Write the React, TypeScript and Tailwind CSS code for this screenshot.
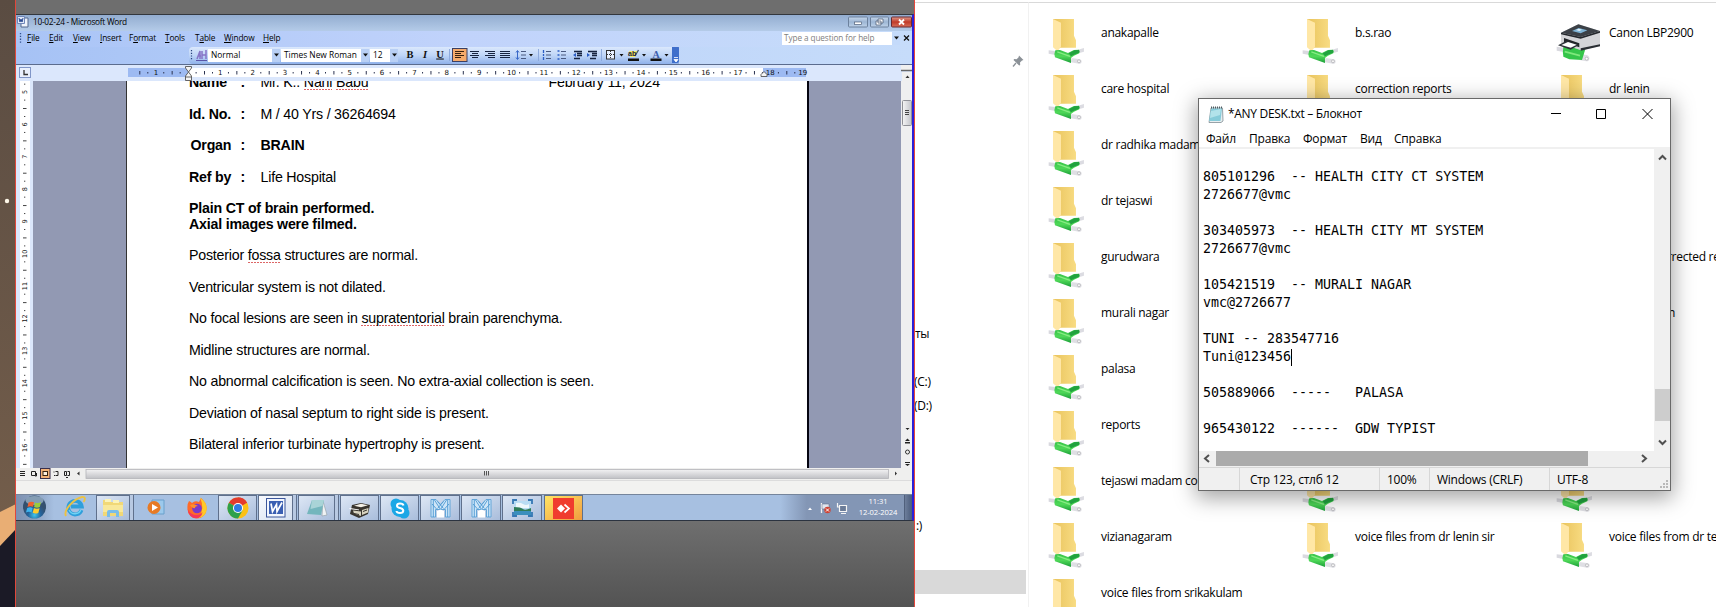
import type { ReactNode } from "react";

const UI = "font-['Open_Sans','Noto_Sans',sans-serif]";

/* ---------- Remote desktop: Word ---------- */

function Caret({ className = "" }: { className?: string }) {
  return (
    <svg className={className} width="7" height="4" viewBox="0 0 7 4">
      <path d="M1 .5h5L3.5 3.5z" fill="#111" />
    </svg>
  );
}

function WordTitleBar() {
  return (
    <div className="flex h-4 shrink-0 items-center bg-gradient-to-b from-[#93add0] to-[#b4cbe8] pb-0.5">
      <svg width="13" height="12" viewBox="0 0 13 12" className="ml-px">
        <path d="M4 2h7v9H4z" fill="#eef3fb" stroke="#55698f" />
        <path d="M.5.5h7v7h-7z" fill="#dfe8f8" stroke="#6f86b8" />
        <path d="M2 2l1 4 1-3 1 3 1-4" fill="none" stroke="#2b4a91" />
      </svg>
      <span className="ml-[3px] flex-1 text-[8.3px] leading-4 tracking-[-0.27px] text-black">10-02-24 - Microsoft Word</span>
      <svg width="64" height="12" viewBox="0 0 64 12">
        <defs>
          <linearGradient id="wb" x2="0" y2="1">
            <stop offset="0" stopColor="#c6d6ea" />
            <stop offset=".5" stopColor="#9db6d4" />
            <stop offset="1" stopColor="#bfd3ea" />
          </linearGradient>
          <linearGradient id="wr" x2="0" y2="1">
            <stop offset="0" stopColor="#e09a8c" />
            <stop offset=".5" stopColor="#c03a28" />
            <stop offset="1" stopColor="#d8705c" />
          </linearGradient>
        </defs>
        <rect x=".5" y="1" width="19" height="10" rx="1" fill="url(#wb)" stroke="#6c819d" />
        <rect x="22.500" y="1" width="18" height="10" rx="1" fill="url(#wb)" stroke="#6c819d" />
        <rect x="43.500" y="1" width="20" height="10" rx="1" fill="url(#wr)" stroke="#6b2a30" />
        <rect x="6.500" y="6" width="7" height="2.500" fill="#fff" stroke="#51607a" strokeWidth=".7" />
        <path d="M30 3h5v4h-5zM28 5h5v4h-5z" fill="#fff" stroke="#51607a" strokeWidth=".8" />
        <path d="M51 3.500l5 5m0-5l-5 5" stroke="#fff" strokeWidth="1.800" />
      </svg>
    </div>
  );
}

function MenuWord({ w, pre = "", u, post }: { w: string; pre?: string; u: string; post: string }) {
  return (
    <span className={w}>
      {pre}
      <span className="underline decoration-1 underline-offset-1">{u}</span>
      {post}
    </span>
  );
}

function WordMenuBar() {
  return (
    <div className="flex h-4 shrink-0 items-center bg-gradient-to-r from-[#a9c4f6] via-[#c1d3fb] via-50% to-[#c6dcfa] pb-0.5">
      <svg width="4" height="12" className="ml-[3px]">
        <path d="M1.500 1v11" stroke="#33508f" strokeWidth="1.300" strokeDasharray="1.300 1.500" />
      </svg>
      <div className="ml-[4px] flex flex-1 text-[8.3px] leading-4 tracking-[-0.15px] text-black">
        <MenuWord w="w-[22px]" u="F" post="ile" />
        <MenuWord w="w-6" u="E" post="dit" />
        <MenuWord w="w-[27px]" u="V" post="iew" />
        <MenuWord w="w-[29px]" u="I" post="nsert" />
        <MenuWord w="w-9" pre="F" u="o" post="rmat" />
        <MenuWord w="w-[30px]" u="T" post="ools" />
        <MenuWord w="w-[29px]" pre="T" u="a" post="ble" />
        <MenuWord w="w-[39px]" u="W" post="indow" />
        <MenuWord w="w-8" u="H" post="elp" />
      </div>
      <div className="flex h-[13px] w-[110px] items-center bg-white pl-[2px] text-[8.2px] leading-3 tracking-[-0.08px] text-[#808080]">Type a question for help</div>
      <div className="flex h-[13px] w-[8px] items-center justify-center bg-[#c4dafa]">
        <Caret />
      </div>
      <svg width="9" height="8" viewBox="0 0 9 8" className="mr-px ml-[2px]">
        <path d="M2 1.500l5 5m0-5l-5 5" stroke="#111" strokeWidth="1.300" />
      </svg>
    </div>
  );
}

function Combo({ w, children }: { w: string; children: ReactNode }) {
  return (
    <div className="flex items-center">
      <div className={`${w} h-[13px] bg-white pl-[3px] text-[8.4px] leading-[12px] text-black`}>{children}</div>
      <div className="flex h-[13px] w-[8px] items-center justify-center bg-[#b9d0f5]">
        <Caret />
      </div>
    </div>
  );
}

function WordToolbar() {
  return (
    <div className="flex h-[17px] shrink-0 items-center bg-gradient-to-r from-[#a6c2f5] via-[#bcd3f9] to-[#c6dcfa] pl-[173px]">
      <div className="flex h-[17px] w-[490px] items-center rounded-l-sm bg-gradient-to-b from-[#dbe8fc] via-[#bed5f7] to-[#8fb1ea] pb-px">
        <svg width="19" height="14" viewBox="0 0 19 14">
          <path d="M2.500 2v10" stroke="#27417c" strokeWidth="1.200" strokeDasharray="1.200 1.500" />
          <path d="M8 11l3-8v8M9 8h3M13 3v8M17 2v9M13 7h4" fill="none" stroke="#8674c6" strokeWidth="1.500" />
          <path d="M7 12.500h11" stroke="#5a55a8" />
        </svg>
        <Combo w="w-16">Normal</Combo>
        <div className="w-px" />
        <Combo w="w-20">Times New Roman</Combo>
        <div className="w-px" />
        <Combo w="w-5">12</Combo>
        <svg className="ml-1 shrink-0" width="277" height="16" viewBox="402 47 277 16">
          <path d="M449.500 49v12M538.500 49v12M601.500 49v12" stroke="#8fabdd" />
          <g fontFamily="Liberation Serif, serif" fontSize="10.500" fill="#111" textAnchor="middle">
            <text x="410" y="58" fontWeight="bold">B</text>
            <text x="425" y="58" fontWeight="bold" fontStyle="italic">I</text>
            <text x="440" y="57.500" fontWeight="bold" textDecoration="underline">U</text>
          </g>
          <rect x="452.500" y="48.500" width="14.500" height="13" fill="#f5ab6c" stroke="#3b3f63" />
          <path d="M455 51.500h9M455 53.500h6M455 55.500h9M455 57.500h6" stroke="#38210e" strokeWidth="1.200" />
          <path d="M470 51.500h9M472 53.500h6M470 55.500h9M472 57.500h6M485 51.500h10M488 53.500h7M485 55.500h10M488 57.500h7M500 51.500h10M500 53.500h10M500 55.500h10M500 57.500h10" stroke="#16233f" strokeWidth="1.200" />
          <path d="M517.500 51v8M516 52.500l1.500-2 1.500 2M516 57.500l1.500 2 1.500-2" stroke="#3868c8" fill="none" />
          <path d="M521 51.500h5M521 55h5M521 58.500h5" stroke="#4a5a80" />
          <path d="M543.500 50v3M543.500 54v2M543.500 57v3" stroke="#2b5dc5" strokeWidth="1.300" />
          <path d="M546 51.500h5M546 55h5M546 58.500h5M561 51.500h5M561 55h5M561 58.500h5" stroke="#4a5a80" />
          <path d="M557.500 51h2M557.500 55h2M557.500 59h2" stroke="#2b5dc5" strokeWidth="1.600" />
          <path d="M574 51.500h8M577 53.500h5M577 55.500h5M574 58.500h6M588 51.500h9M592 53.500h5M592 55.500h5M590 58.500h6" stroke="#16233f" strokeWidth="1.300" />
          <path d="M576 53l-3 2 3 2zM587 53l3 2-3 2z" fill="#2b5dc5" />
          <rect x="606.500" y="50.500" width="8" height="8.500" fill="#e9f1ff" stroke="#333" />
          <path d="M610.500 51v8M607 54.500h8" stroke="#333" strokeDasharray="1 1" />
          <path d="M629 51h9l-3 6h-5z" fill="#f5ef6c" />
          <path d="M628 58.500h11v2.500h-11z" fill="#111" />
          <path d="M638.500 50l-3.500 6" stroke="#456" strokeWidth="1.300" />
          <text x="628" y="56" fontSize="7" fontWeight="bold" fontFamily="Liberation Sans, sans-serif" fill="#223">ab</text>
          <text x="656" y="57.500" fontSize="10" fontWeight="bold" fontFamily="Liberation Serif, serif" textAnchor="middle" fill="#3d5fae">A</text>
          <path d="M650.500 58.500h11v2.500h-11z" fill="#111" />
          <path d="M529 54h4l-2 2.500zM619.500 54h4l-2 2.500zM642 54h4l-2 2.500zM664.500 54h4l-2 2.500z" fill="#111" />
          <path d="M672 46h5a2 2 0 0 1 2 2v13a2 2 0 0 1-2 2h-5z" fill="#3f6fcb" />
          <path d="M674 57.500h4M674 59.500h4l-2 2.500z" stroke="#fff" strokeWidth=".8" fill="#fff" />
        </svg>
      </div>
    </div>
  );
}

const range = (a: number, b: number) => Array.from({ length: b - a + 1 }, (_, i) => a + i);

function HorizontalRuler() {
  const unit = 32.35;
  return (
    <div className="flex h-4 shrink-0 bg-[#dbe7fc]">
      <svg width="896" height="16" viewBox="16 65 896 16">
        <rect x="19.500" y="67.500" width="11" height="10" fill="#e9f0fd" stroke="#8096c8" />
        <path d="M24 70v4.500h4" fill="none" stroke="#333" strokeWidth="1.300" />
        <rect x="128" y="68" width="60" height="9" fill="#9dbaf2" />
        <rect x="188" y="68" width="575" height="9" fill="#fff" />
        <rect x="763" y="68" width="43" height="9" fill="#9dbaf2" />
        {range(-2, 18).map((n) => {
          const x = 188 + n * unit;
          return (
            <g key={n} fill="#2c3350">
              {n > -2 && <rect x={x + 7.6} y="72" width="1" height="1.500" />}
              {x + 16 > 128 && x + 16 < 804 && <rect x={x + 16} y="71" width="1" height="3.500" />}
              {x + 24 > 128 && x + 24 < 804 && <rect x={x + 24} y="72" width="1" height="1.500" />}
            </g>
          );
        })}
        <g fontSize="7" fontFamily="DejaVu Sans, sans-serif" textAnchor="middle" fill="#111">
          <text x="156" y="75.300">1</text>
          {range(1, 19).map((n) => (
            <text key={n} x={188 + n * unit} y="75.300">
              {n}
            </text>
          ))}
        </g>
        <path d="M185.500 66.500h6v1.500l-3 4 3 4v4.500h-6V76l3-4-3-4zM185.500 77h6" fill="#f4f4f4" stroke="#555" strokeWidth=".9" />
        <path d="M761 76.500v-2l3-3 3 3v2z" fill="#f4f4f4" stroke="#555" strokeWidth=".9" />
        <path d="M901 65h11v5h-11z" fill="#efefef" />
        <path d="M901 70.500h11" stroke="#666" strokeWidth="1.500" />
        <path d="M902 72h10v9h-10z" fill="#efefef" />
        <path d="M905.500 78l2-2.500 2 2.500z" fill="#333" />
      </svg>
    </div>
  );
}

function VerticalRuler() {
  const unit = 32.35;
  return (
    <svg width="17" height="387" viewBox="16 81 17 387" className="shrink-0 bg-[#dbe7fc]">
      <rect x="20" y="81" width="10" height="387" fill="#fff" />
      {range(4, 16).map((n) => {
        const y = 92 + (n - 5) * unit;
        return (
          <g key={n} fill="#444">
            <rect x="24" y={y + 7.6} width="1.300" height="1" />
            <rect x="23" y={y + 16} width="3.500" height="1" />
            <rect x="24" y={y + 24} width="1.300" height="1" />
          </g>
        );
      })}
      <g fontSize="6.500" fontFamily="DejaVu Sans, sans-serif" textAnchor="middle" fill="#111">
        {range(5, 16).map((n) => {
          const y = 92 + (n - 5) * unit;
          return (
            <text key={n} x="27" y={y} transform={`rotate(-90 27 ${y})`}>
              {n}
            </text>
          );
        })}
      </g>
    </svg>
  );
}

function Misspelt({ children }: { children: ReactNode }) {
  return (
    <span className="bg-[repeating-linear-gradient(90deg,#d66_0_2px,transparent_2px_3px)] bg-[length:100%_1px] bg-[position:0_15px] bg-no-repeat">
      {children}
    </span>
  );
}

function Field({ label, value, indent = "", bold = false }: { label: ReactNode; value: ReactNode; indent?: string; bold?: boolean }) {
  return (
    <div className="mb-[15.76px] flex">
      <b className={`w-[51.5px] ${indent}`}>{label}</b>
      <b className="w-[20px]">:</b>
      <span className={bold ? "font-bold" : ""}>{value}</span>
    </div>
  );
}

function DocumentPage() {
  return (
    <div className="w-[680px] shrink-0 overflow-hidden bg-white pl-[62px] font-['Liberation_Sans',Arial,sans-serif] text-[14.2px] leading-[15.76px] tracking-[-0.2px] whitespace-pre text-black">
      <div className="-mt-[6px] mb-[15.76px] flex">
        <b className="w-[51.5px]">Name</b>
        <b className="w-[20px]">:</b>
        <span className="w-[288px]">
          Mr. K.. <Misspelt>Nani</Misspelt> <Misspelt>Babu</Misspelt>
        </span>
        <span>February 11, 2024</span>
      </div>
      <Field label="Id. No." value="M / 40 Yrs / 36264694" />
      <Field label="Organ" value="BRAIN" indent="pl-[1.5px]" bold />
      <Field label="Ref by" value="Life Hospital" />
      <p className="font-bold">Plain CT of brain performed.</p>
      <p className="mb-[15.76px] font-bold">Axial images were filmed.</p>
      <p className="mb-[15.76px]">
        Posterior <Misspelt>fossa</Misspelt> structures are normal.
      </p>
      <p className="mb-[15.76px]">Ventricular system is not dilated.</p>
      <p className="mb-[15.76px]">
        No focal lesions are seen in <Misspelt>supratentorial</Misspelt> brain parenchyma.
      </p>
      <p className="mb-[15.76px]">Midline structures are normal.</p>
      <p className="mb-[15.76px]">No abnormal calcification is seen. No extra-axial collection is seen.</p>
      <p className="mb-[15.76px]">Deviation of nasal septum to right side is present.</p>
      <p>Bilateral inferior turbinate hypertrophy is present.</p>
    </div>
  );
}

function DocumentArea() {
  return (
    <div className="flex h-[387px] shrink-0 overflow-hidden bg-[#9299b3]">
      <VerticalRuler />
      <div className="w-[94px] shrink-0 border-r border-[#333]" />
      <DocumentPage />
      <div className="w-[2px] shrink-0 bg-[#050510]" />
      <div className="flex-1" />
      <svg width="11" height="387" viewBox="901 81 11 387" className="shrink-0 bg-[#efeff0]">
        <defs>
          <linearGradient id="th">
            <stop offset="0" stopColor="#f6f6f6" />
            <stop offset="1" stopColor="#c2c3c9" />
          </linearGradient>
        </defs>
        <rect x="902.500" y="100.500" width="9" height="25" rx="1" fill="url(#th)" stroke="#8f9096" />
        <path d="M905 110.500h4M905 112.500h4M905 114.500h4" stroke="#444" />
        <path d="M905.500 428l2 2 2-2z M905 441l2.500-2.500 2.500 2.500zM905 443.500h5v-1.500h-5zM905 462h5v1h-5zM905 464l2.500 2 2.500-2z" fill="#222" />
        <circle cx="907.500" cy="452" r="2" fill="none" stroke="#333" />
      </svg>
    </div>
  );
}

function ViewBar() {
  return (
    <div className="h-[12px] shrink-0 bg-[#efefee]">
      <svg width="896" height="12" viewBox="16 468 896 12" className="block">
        <defs>
          <linearGradient id="hs" x2="0" y2="1">
            <stop offset="0" stopColor="#f2f2f3" />
            <stop offset="1" stopColor="#c0c1c5" />
          </linearGradient>
        </defs>
        <path d="M20 471.500h5M20 473.500h5M20 475.500h5" stroke="#222" strokeWidth="1.200" />
        <path d="M31.500 471.500h4v4h-4zM35 476h1.500v-3" fill="none" stroke="#222" />
        <rect x="40.500" y="468.500" width="9.500" height="10" fill="#f3b277" stroke="#3a2f4a" />
        <rect x="43" y="471.500" width="4.500" height="4" fill="#fff1df" stroke="#3a2412" />
        <path d="M53.500 472h1M55.500 471.500h2.500v4h-2.500M54 475.500h1" fill="none" stroke="#222" />
        <path d="M64.500 471.500h2v4h-2zM67.500 471.500h2v4h-2M66 477.500h2" fill="none" stroke="#222" />
        <path d="M79.500 471.500v4l-2.500-2z" fill="#333" />
        <rect x="86" y="469.500" width="802.500" height="9" fill="url(#hs)" stroke="#b3b4b8" strokeWidth=".8" />
        <path d="M484.500 471v4.500M486.500 471v4.500M488.500 471v4.500" stroke="#555" />
        <path d="M895 471.500v4l2-2z" fill="#333" />
      </svg>
    </div>
  );
}

/* ---------- Remote desktop: taskbar ---------- */

function TaskButton({ w, ml = "", stacked = false, tone = "from-[#dde7f5] to-[#a9bddb]", children }: { w: string; ml?: string; stacked?: boolean; tone?: string; children: ReactNode }) {
  return (
    <div className={`flex h-[25px] shrink-0 ${ml}`}>
      <div className={`${w} flex items-center justify-center border-x border-t border-[#5f708c] bg-gradient-to-br ${tone}`}>{children}</div>
      {stacked && <div className="w-1 border-r border-[#5f708c] bg-[#b8c9e2]" />}
    </div>
  );
}

function MIcon() {
  return (
    <svg width="21" height="20" viewBox="0 0 21 20">
      <path d="M1 1.500h5l4.500 5 4.500-5h5V19h-4.500v-7.500h-10V19H1z" fill="#cfe6f8" stroke="#62a5d8" />
      <path d="M3.300 2v17M4.500 2l6 9.500 6-9.500M17.700 2v17M2 6l5 5.500M19 6l-5 5.500M7.500 3.500l6 7M13.500 3.500l-6 7" fill="none" stroke="#4c98d2" strokeWidth=".9" />
      <path d="M7 13l3.500-1.500L14 13v6.500H7z" fill="#fff" />
    </svg>
  );
}

function Taskbar() {
  return (
    <div className="flex h-[26px] shrink-0 items-start overflow-hidden border-t border-[#75859b] bg-[#a7c0e1]">
      <div className="flex h-full w-[38px] shrink-0 items-center justify-center bg-gradient-to-r from-[#7d91b1] via-[#8ba1c1] to-[#a7c0e1]">
        <svg width="26" height="24" viewBox="0 0 26 24" className="-mt-0.5">
          <defs>
            <radialGradient id="orb" cy=".85">
              <stop offset="0" stopColor="#3fc6ee" />
              <stop offset=".55" stopColor="#23639c" />
              <stop offset="1" stopColor="#34506f" />
            </radialGradient>
          </defs>
          <circle cx="12.500" cy="12" r="11.500" fill="url(#orb)" />
          <ellipse cx="12.500" cy="5.500" rx="9" ry="4.500" fill="#c7dcec" opacity=".55" />
          <path d="M6.500 7.500q3-1.500 5.500-.3l-1 4.600q-2.700-1-5.500.2z" fill="#f0612e" />
          <path d="M13 7.500q3 1.200 6-.3l-1.200 4.900q-3 1.200-5.700-.2z" fill="#9ccc3c" />
          <path d="M5.200 13q2.800-1.200 5.500-.1L9.500 17.500q-2.700-1.300-5.500 0z" fill="#3db4f0" />
          <path d="M11.900 13.100q2.700 1.200 5.700.2L16.300 18q-3 1.200-5.600-.2z" fill="#fccc2e" />
        </svg>
      </div>
      <svg width="22" height="24" viewBox="0 0 22 24" className="ml-[10px] shrink-0">
        <path d="M17.500 15a6.800 6.800 0 1 1 .3-3.500H7" fill="none" stroke="#2f9fdb" strokeWidth="3.800" />
        <path d="M17 14.500a6.500 6.500 0 0 1-12 .5" fill="none" stroke="#6fd3f5" strokeWidth="1.300" />
        <path d="M2 21C-1 16 9 4 18 2c4-.6 3 3 1.500 5" fill="none" stroke="#ecc243" strokeWidth="1.900" />
      </svg>
      <TaskButton w="w-[34px]" ml="ml-[10px]" stacked>
        <svg width="22" height="20" viewBox="0 0 22 20">
          <path d="M1 2h7l1 2h12v14H1z" fill="#f1d877" />
          <path d="M3 1h6v3H3zM11 2h6v3h-6z" fill="#fbf3b9" />
          <path d="M1 7h20v7H1z" fill="#f8e89a" />
          <path d="M5 19v-5q0-2 2-2h8q2 0 2 2v5h-3v-4H8v4z" fill="#79bde9" />
        </svg>
      </TaskButton>
      <svg width="18" height="18" viewBox="0 0 18 18" className="mt-[4px] ml-[13px] shrink-0">
        <path d="M5 1h12v14H5z" fill="#9cc9ec" stroke="#6aa0cc" />
        <circle cx="7" cy="8.500" r="6.500" fill="#e77a25" />
        <path d="M5 5l6 3.500L5 12z" fill="#fff" />
      </svg>
      <svg width="22" height="22" viewBox="0 0 22 22" className="mt-[2px] ml-[21px] shrink-0">
        <path d="M3 4q2 1 3 2Q9 3 13 5l2-4q6 5 5.500 11A9.500 9.500 0 0 1 1.500 12Q1 7 3 4z" fill="#ff6a28" />
        <path d="M14 .5q7 5 6.800 11.500a9.500 9.500 0 0 1-8 9Q19 12 14 .5z" fill="#ffc928" />
        <path d="M1.600 12q3 6 9 6 4 0 6-3-1 6-6.600 6.300-7 0-8.400-9.300z" fill="#f5375a" />
        <circle cx="11" cy="11.500" r="4.800" fill="#7a39c9" />
        <path d="M4 8q4-2 8 1-3 0-3 2-3 1-5-3z" fill="#ff8f2a" />
      </svg>
      <TaskButton w="w-[39px]" ml="ml-[10px]">
        <svg width="22" height="22" viewBox="0 0 22 22">
          <circle cx="11" cy="11" r="10.500" fill="#fbc116" />
          <path d="M11 11L1.900 5.750A10.500 10.500 0 0 1 20.100 5.750z" fill="#e33b2e" />
          <path d="M11 .5a10.500 10.500 0 0 1 9.100 5.250H11z" fill="#e33b2e" />
          <path d="M11 11L1.900 5.750A10.500 10.500 0 0 0 11 21.500l4.500-8z" fill="#2da04c" />
          <circle cx="11" cy="11" r="5" fill="#fff" />
          <circle cx="11" cy="11" r="4" fill="#2f7be4" />
        </svg>
      </TaskButton>
      <TaskButton w="w-[35px]" ml="ml-px" stacked tone="from-[#f8fafe] to-[#d5e0f0]">
        <svg width="20" height="20" viewBox="0 0 20 20">
          <rect x=".5" y=".5" width="18.500" height="18.500" fill="#f2f6fd" stroke="#3b569b" />
          <path d="M3 3h14v13H3z" fill="#3a5fb2" />
          <path d="M5 5.500l1.500 8 4-7 .5 7 5-9" fill="none" stroke="#fff" strokeWidth="1.700" />
        </svg>
      </TaskButton>
      <TaskButton w="w-[37px]" ml="ml-px" stacked>
        <svg width="22" height="20" viewBox="0 0 22 20">
          <path d="M17 3l4 14-5 1z" fill="#f0f3f4" stroke="#8f9ca3" strokeWidth=".6" />
          <path d="M6 2h12l-3 15-14-1z" fill="#74b6bd" />
          <path d="M6 2h12l-1.500 6-12 3z" fill="#a9d4d7" />
        </svg>
      </TaskButton>
      <TaskButton w="w-[39px]" ml="ml-px">
        <svg width="23" height="17" viewBox="0 0 23 17" className="mt-1">
          <path d="M4 3l9-2 9 2-2 9-9 4-9-4z" fill="#39352e" />
          <path d="M6 3.700l7-1.900 7 1.400-7 2z" fill="#f5f2e8" />
          <path d="M5 8.500l8 1v4.500l-7-2.500zM14 8l6.500-2-.5 4.500-6 2.500z" fill="#d8d3bf" />
          <path d="M6 11.500l5 1M15 9.500l4-1.500" stroke="#39352e" />
          <path d="M2 6l9 1.500v.8L1 7z" fill="#fff" />
        </svg>
      </TaskButton>
      <TaskButton w="w-[39px]" ml="ml-px">
        <svg width="20" height="21" viewBox="0 0 20 21">
          <circle cx="10" cy="10.500" r="8.500" fill="#1aa7e6" />
          <circle cx="6" cy="6" r="5.500" fill="#1aa7e6" />
          <circle cx="14" cy="15" r="5.500" fill="#1aa7e6" />
          <path d="M13.500 7.500Q13 5.500 10 5.500t-3 2.300q0 1.700 3 2.300t3.300 2.400q0 2.500-3.300 2.500T6.500 13" fill="none" stroke="#fff" strokeWidth="2" />
        </svg>
      </TaskButton>
      <TaskButton w="w-[40px]" ml="ml-px">
        <MIcon />
      </TaskButton>
      <TaskButton w="w-[40px]" ml="ml-px">
        <MIcon />
      </TaskButton>
      <TaskButton w="w-[40px]" ml="ml-px">
        <svg width="21" height="18" viewBox="0 0 21 18">
          <path d="M2 2h17v14H2z" fill="#b9dcf4" />
          <path d="M4 4q4-1 7 1t6 0v4H4z" fill="#eef7fc" />
          <path d="M2 8q7 0 9 2t8-1v3H2z" fill="#2f7c58" />
          <path d="M2 12h17v4H2z" fill="#3a8fbd" />
          <path d="M1 5V1h4M16 1h4v4M20 13v4h-4M5 17H1v-4" fill="none" stroke="#3678b4" strokeWidth="1.800" />
        </svg>
      </TaskButton>
      <TaskButton w="w-[39px]" ml="ml-[2px]" tone="from-[#ffe564] to-[#ef9c3f]">
        <svg width="21" height="21" viewBox="0 0 21 21">
          <path d="M0 0h21v21H0z" fill="#f03c2e" />
          <path d="M4 10.500L8 6.500l4 4-4 4z" fill="#fff" />
          <path d="M11.500 6.500l4.500 4-4.500 4" fill="none" stroke="#fff" strokeWidth="1.700" />
        </svg>
      </TaskButton>
      <div className="flex h-full flex-1 items-center justify-end bg-gradient-to-r from-[#a7c0e1] from-60% to-[#8396b5] to-68%">
        <svg width="42" height="14" viewBox="806 500 42 14">
          <path d="M808 509l2-2.500 2 2.500z" fill="#fff" />
          <path d="M821.500 502v10" stroke="#f4f4f4" strokeWidth="1.300" />
          <path d="M822 503h7v5h-7z" fill="#dfe5ee" stroke="#596780" strokeWidth=".5" />
          <circle cx="827.500" cy="509" r="3.200" fill="#cf4536" />
          <path d="M826 507.500l3 3m0-3l-3 3" stroke="#fff" />
          <path d="M839.500 504.500h7v6h-7z" fill="#6b7c98" stroke="#f5f5f5" strokeWidth="1.200" />
          <path d="M837.500 502v4h2M841 512.500h5" fill="none" stroke="#f5f5f5" strokeWidth="1.200" />
        </svg>
        <div className="-mt-px mr-[6px] ml-[10px] w-[40px] text-center text-[7.6px] leading-[11px] tracking-[-0.1px] whitespace-nowrap text-white">
          11:31
          <br />
          12-02-2024
        </div>
        <div className="h-full w-2 border-l border-[#50607c] bg-gradient-to-r from-[#6d7e9b] to-[#4b5c7b]" />
      </div>
    </div>
  );
}

function RemoteDesktop() {
  return (
    <div className={`flex h-full w-[899px] shrink-0 flex-col border-r border-[#e5483c] bg-[#6e6e6e] ${UI}`}>
      <div className="h-[14px] shrink-0 bg-[#6e6e6e]" />
      <div className="flex h-[507px] shrink-0 flex-col border-t border-r-2 border-b border-t-[#33373d] border-r-[#2a20d8] border-b-[#2b3340]">
        <WordTitleBar />
        <WordMenuBar />
        <WordToolbar />
        <div className="h-px shrink-0 bg-[#5b6c8e]" />
        <HorizontalRuler />
        <DocumentArea />
        <ViewBar />
        <div className="h-[14px] shrink-0 border-t border-[#dcdcdc] bg-[#f2f2f0]" />
        <Taskbar />
      </div>
      <div className="flex-1 bg-gradient-to-b from-[#6f6f6f] to-[#535353]" />
    </div>
  );
}

/* ---------- Explorer ---------- */

function FolderIcon() {
  return (
    <svg width="37.300" height="47.300" viewBox="84 54 112 142" className="shrink-0">
      <defs>
        <linearGradient id="fb">
          <stop offset="0" stopColor="#e9c35c" />
          <stop offset="1" stopColor="#f8dc83" />
        </linearGradient>
        <linearGradient id="gc" x2="0" y2="1">
          <stop offset="0" stopColor="#35c247" />
          <stop offset=".5" stopColor="#4fd858" />
          <stop offset="1" stopColor="#1c9f39" />
        </linearGradient>
      </defs>
      <path d="M99 57h63v50l6 14v22h-63z" fill="url(#fb)" />
      <path d="M99 57l24 11v72l-10 14-14-12z" fill="#ffe7a6" />
      <path d="M86 151l20 2v12l-20-4z" fill="#d9d9df" />
      <path d="M174 149l18-5v11l-16 5z" fill="#dcdce2" />
      <path d="M106 151l14-1 24 9 18-9 15-1q4 5 1 11l-16 7-9 7v15l-48-17q-4-10 1-21z" fill="url(#gc)" />
      <path d="M146 160l18-9 13-1q2 4 0 8l-15 6-9 5z" fill="#21a23f" />
      <path d="M112 156l38 13" stroke="#86ec83" strokeWidth="4" />
      <path d="M154 174l22 3q9 1 9 8t-8 6l-24-4z" fill="#dfdfe4" />
      <circle cx="177" cy="184" r="4.500" fill="#f7f7f7" stroke="#a9a9ad" strokeWidth="2" />
    </svg>
  );
}

function PrinterIcon() {
  return (
    <svg width="44.700" height="39.300" viewBox="228 68 134 118" className="mt-[5px] shrink-0">
      <path d="M230 139l22 3v13l-22-4z" fill="#d9d9df" />
      <path d="M304 162l16 2q9 3 8 11t-9 8l-18-3z" fill="#dfdfe4" />
      <path d="M250 140l66 6-6 20-4 13-38-2-18-8q-3-14 0-29z" fill="#35c54a" />
      <path d="M254 154l46 12" stroke="#7fe87c" strokeWidth="5" />
      <circle cx="320" cy="175" r="4.500" fill="#fff" stroke="#a9a9ad" strokeWidth="2" />
      <path d="M243 97l52-25 65 20v45l-58 13-59-22z" fill="#d4d5d8" />
      <path d="M243 97l52-25 65 20-58 18z" fill="#3c4147" />
      <path d="M243 97l59 13 58-18v5l-58 18-59-13z" fill="#24282d" />
      <path d="M276 92l20-9 26 7-20 9z" fill="#7fb4d6" />
      <path d="M288 89l8-4 10 3-8 4z" fill="#e4f2fa" />
      <path d="M252 113l46 16v12l-46-16z" fill="#222629" />
      <path d="M234 135l24-13 38 12-24 14z" fill="#2e3338" />
      <path d="M244 134l20-9 26 8-18 9z" fill="#fff" />
      <path d="M302 144l58-12v6l-58 13z" fill="#2a2e33" />
    </svg>
  );
}

type Item = { label?: string; icon: "folder" | "printer" | "none"; shift?: string };

const rows: Item[][] = [
  [{ label: "anakapalle", icon: "folder" }, { label: "b.s.rao", icon: "folder" }, { label: "Canon LBP2900", icon: "printer" }],
  [{ label: "care hospital", icon: "folder" }, { label: "correction reports", icon: "folder" }, { label: "dr lenin", icon: "folder" }],
  [{ label: "dr radhika madam", icon: "folder" }],
  [{ label: "dr tejaswi", icon: "folder" }],
  [{ label: "gurudwara", icon: "folder" }, { icon: "none" }, { label: "rrected re", icon: "none", shift: "pl-[58px]" }],
  [{ label: "murali nagar", icon: "folder" }, { icon: "none" }, { label: "n", icon: "none", shift: "pl-[59px]" }],
  [{ label: "palasa", icon: "folder" }],
  [{ label: "reports", icon: "folder" }],
  [{ label: "tejaswi madam cor", icon: "folder" }, { icon: "folder" }, { icon: "folder" }],
  [{ label: "vizianagaram", icon: "folder" }, { label: "voice files from dr lenin sir", icon: "folder" }, { label: "voice files from dr te", icon: "folder" }],
  [{ label: "voice files from srikakulam", icon: "folder" }],
];

function FileCell({ item }: { item: Item }) {
  return (
    <div className="flex w-[254px] shrink-0 items-start">
      <div className="w-[53px] shrink-0">
        {item.icon === "folder" && <FolderIcon />}
        {item.icon === "printer" && <PrinterIcon />}
      </div>
      <span className={`mt-[7px] whitespace-nowrap ${item.shift ?? ""}`}>{item.label}</span>
    </div>
  );
}

function Explorer() {
  return (
    <div className={`flex h-full flex-1 overflow-hidden bg-white pt-[2px] text-[12px] leading-4 tracking-[-0.28px] text-black ${UI}`}>
      <div className="flex w-[114px] shrink-0 flex-col border-t border-r border-t-[#d9d9d9] border-r-[#f1f1f1]">
        <svg width="12" height="12" viewBox="0 0 12 12" className="mt-[52px] ml-[97px] shrink-0">
          <path d="M7 .5L11.500 5l-1.500.5-2 2 .2 2.500-1 .5L1.500 5l.7-1 2.400.2 2-2z" fill="#8b9197" />
          <path d="M4 8L1 11.500" stroke="#8b9197" strokeWidth="1.300" />
        </svg>
        <div className="mt-[259px]">ты</div>
        <div className="mt-8 -ml-px">(C:)</div>
        <div className="mt-2 -ml-px">(D:)</div>
        <div className="mt-[104px] ml-px">:)</div>
        <div className="mt-[36px] h-6 w-[111px] bg-[#d9d9d9]" />
      </div>
      <div className="flex flex-1 flex-col overflow-hidden border-t border-[#d9d9d9] pt-[15px] pl-[19px]">
        {rows.map((row, i) => (
          <div key={i} className="flex h-14 shrink-0">
            {row.map((item, j) => (
              <FileCell key={j} item={item} />
            ))}
          </div>
        ))}
      </div>
    </div>
  );
}

/* ---------- Notepad ---------- */

const note = `805101296  -- HEALTH CITY CT SYSTEM
2726677@vmc

303405973  -- HEALTH CITY MT SYSTEM
2726677@vmc

105421519  -- MURALI NAGAR
vmc@2726677

TUNI -- 283547716
Tuni@123456`;

const noteTail = `

505889066  -----   PALASA

965430122  ------  GDW TYPIST`;

function Notepad() {
  return (
    <div className={`absolute top-[98px] left-[1198px] flex h-[393px] w-[473px] flex-col border border-[#696969] bg-white text-black shadow-[0_5px_20px_2px_rgba(0,0,0,0.36)] ${UI}`}>
      <div className="flex h-[31px] shrink-0 items-center pb-px pl-[9px] text-[12px] tracking-[-0.3px]">
        <svg width="16" height="17" viewBox="0 0 16 17">
          <path d="M3 2h11.500l.5 13-2 1.500H1z" fill="#e8eef0" stroke="#7f8d93" strokeWidth=".8" />
          <path d="M3 2.500h11L12.500 15H1z" fill="#86cbd9" />
          <path d="M3 5l10-2-1 6-10 3z" fill="#b2e2ea" />
          <path d="M3 1.500h11.500" stroke="#4d5c62" strokeWidth="2" strokeDasharray="1 1" />
        </svg>
        <span className="ml-[4px] flex-1 leading-4">*ANY DESK.txt – Блокнот</span>
        <svg width="103" height="12" viewBox="0 0 103 12" className="mr-[16px]" fill="none" stroke="#000">
          <path d="M0 5.500h10M45.500 1.500h9v9h-9zM91.500 1l10 10m0-10l-10 10" />
        </svg>
      </div>
      <div className="flex h-[19px] shrink-0 items-center border-b-2 border-[#f0f0f0] pt-px text-[12px] leading-4 tracking-[-0.2px]">
        <span className="ml-[7px] w-[43px]">Файл</span>
        <span className="w-[54px]">Правка</span>
        <span className="w-[57px]">Формат</span>
        <span className="w-[34px]">Вид</span>
        <span>Справка</span>
      </div>
      <div className="flex h-[302px] shrink-0">
        <pre className="w-[455px] overflow-hidden pt-[19px] pl-[4px] font-['DejaVu_Sans_Mono','Liberation_Mono',monospace] text-[13.3px] leading-[18px]">
          {note}
          <span className="inline-block h-[17px] w-px bg-black align-middle" />
          {noteTail}
        </pre>
        <div className="flex flex-1 flex-col items-center justify-between bg-[#f0f0f0] py-[5px]">
          <svg width="9" height="7" viewBox="0 0 9 7" fill="none" stroke="#505050" strokeWidth="2">
            <path d="M1 5.500l3.500-3.500L8 5.500" />
          </svg>
          <div className="mt-[210px] h-8 w-[15px] bg-[#cdcdcd]" />
          <svg width="9" height="7" viewBox="0 0 9 7" fill="none" stroke="#505050" strokeWidth="2">
            <path d="M1 1.500L4.500 5 8 1.500" />
          </svg>
        </div>
      </div>
      <div className="flex h-[15px] shrink-0 items-center bg-[#f0f0f0]">
        <svg width="17" height="9" viewBox="0 0 17 9" fill="none" stroke="#505050" strokeWidth="2">
          <path d="M10 1L6 4.500 10 8" />
        </svg>
        <div className="h-[15px] w-[372px] bg-[#ababab]" />
        <svg width="66" height="9" viewBox="0 0 66 9" fill="none" stroke="#505050" strokeWidth="2">
          <path d="M54 1l4 3.500L54 8" />
        </svg>
      </div>
      <div className="flex min-h-0 flex-1 items-stretch bg-[#f0f0f0] pt-px text-[12px] leading-[24px] tracking-[-0.25px]">
        <div className="w-[41px] border-t border-r border-[#d7d7d7]" />
        <div className="w-[140px] border-t border-r border-[#d7d7d7] pl-[10px]">Стр 123, стлб 12</div>
        <div className="w-[50px] border-t border-r border-[#d7d7d7] pl-[7px]">100%</div>
        <div className="w-[120px] border-t border-r border-[#d7d7d7] pl-[7px]">Windows (CRLF)</div>
        <div className="flex flex-1 items-end justify-between border-t border-[#d7d7d7] pl-[7px]">
          <span className="h-[22px]">UTF-8</span>
          <svg width="11" height="11" viewBox="0 0 11 11" fill="#b8b8b8">
            <path d="M7 1h2v2H7zM4 4h2v2H4zM7 4h2v2H7zM1 7h2v2H1zM4 7h2v2H4zM7 7h2v2H7z" />
          </svg>
        </div>
      </div>
    </div>
  );
}

function Wallpaper() {
  return (
    <svg width="16" height="607" viewBox="0 0 16 607" className="shrink-0">
      <defs>
        <linearGradient id="wp" x2="0" y2="1">
          <stop offset="0" stopColor="#5a4c42" />
          <stop offset="1" stopColor="#77604c" />
        </linearGradient>
      </defs>
      <path d="M0 0h16v607H0z" fill="url(#wp)" />
      <path d="M0 512l16-8v30l-16 14z" fill="#e9ae74" />
      <path d="M0 546l16-17v78H0z" fill="#1b1a26" />
      <circle cx="7" cy="201" r="2.200" fill="#fff8ea" />
      <path d="M15.500 0v607" stroke="#e0473b" />
    </svg>
  );
}

export default function App() {
  return (
    <div className="relative flex h-[607px] w-[1716px] overflow-hidden bg-white">
      <Wallpaper />
      <RemoteDesktop />
      <Explorer />
      <Notepad />
    </div>
  );
}
